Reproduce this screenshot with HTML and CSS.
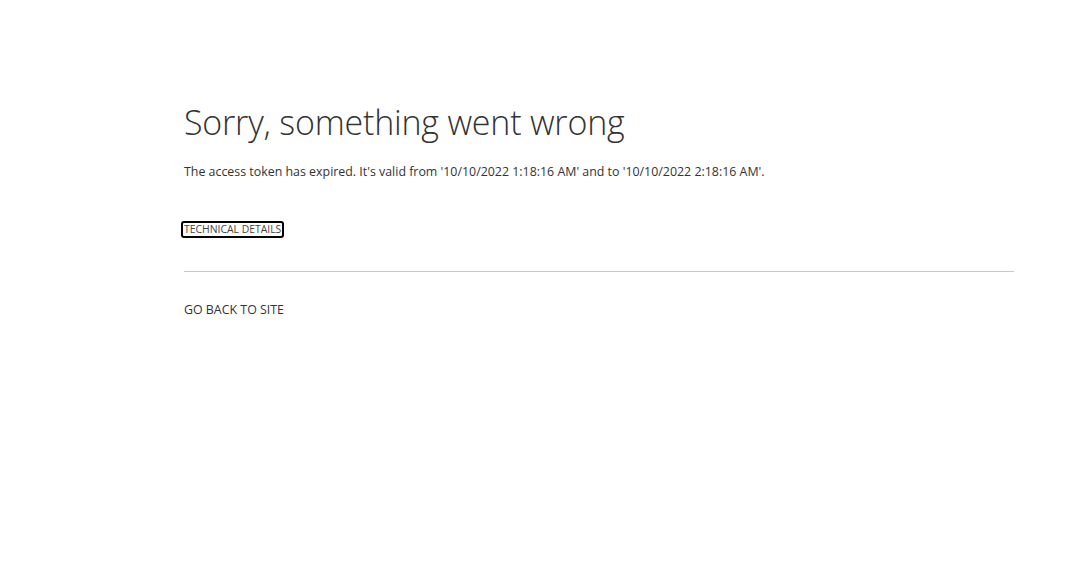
FILE: index.html
```html
<!DOCTYPE html>
<html lang="en">
<head>
<meta charset="utf-8">
<title>Error</title>
<link rel="stylesheet" href="styles.css">
</head>
<body>
<main class="page">
  <h1 class="title">Sorry, something went wrong</h1>
  <p class="message">The access token has expired. It's valid from '10/10/2022 1:18:16 AM' and to '10/10/2022 2:18:16 AM'.</p>
  <div class="details-row">
    <button class="details-btn" type="button">TECHNICAL DETAILS</button>
  </div>
  <hr class="divider">
  <a class="back-link" href="#">GO BACK TO SITE</a>
</main>
</body>
</html>
```

FILE: styles.css
```css
html, body {
  margin: 0;
  padding: 0;
  background: #ffffff;
}

body {
  font-family: "Open Sans", "Noto Sans", "Liberation Sans", sans-serif;
  color: #333333;
}

.page {
  width: 830px;
  padding: 96px 0 0 184px;
  display: flex;
  flex-direction: column;
  align-items: flex-start;
}

.title {
  margin: 0;
  font-size: 34px;
  font-weight: 300;
  line-height: 52px;
  color: #333333;
  letter-spacing: -0.2px;
}

.message {
  margin: 16px 0 0 0;
  font-size: 12.4px;
  line-height: 16px;
  color: #333333;
}

.details-row {
  margin-top: 41px;
  margin-left: -3px;
}

.details-btn {
  display: block;
  font-family: inherit;
  font-size: 10.4px;
  line-height: 13px;
  color: #444444;
  background: #ffffff;
  border: 2px solid #000000;
  border-radius: 3px;
  padding: 0 1px;
  margin: 0;
  cursor: pointer;
}

.divider {
  align-self: stretch;
  margin: 33px 0 0 0;
  border: 0;
  border-top: 1px solid #c8c8c8;
  height: 0;
}

.back-link {
  margin-top: 30px;
  font-size: 12.4px;
  line-height: 16px;
  color: #333333;
  text-decoration: none;
}
```
